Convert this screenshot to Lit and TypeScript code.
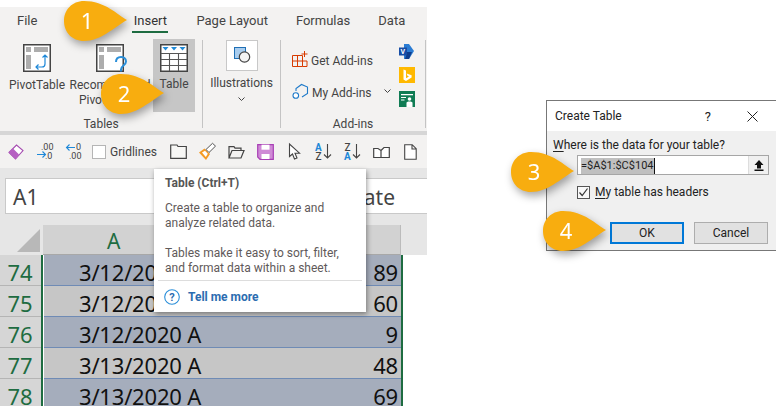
import { LitElement, html, css, svg } from "lit";
import { customElement } from "lit/decorators.js";

const rows = [
  ["74", "3/12/2020 A", "89", "blue"],
  ["75", "3/12/2020 A", "60", "gray"],
  ["76", "3/12/2020 A", "9", "blue"],
  ["77", "3/13/2020 A", "48", "gray"],
  ["78", "3/13/2020 A", "69", "blue"],
];

const pivotBase = svg`
  <rect x="0.75" y="0.75" width="26.5" height="26.5" fill="#fff" stroke="#444" stroke-width="1.5"/>
  <rect x="3" y="3" width="5" height="5" fill="#adadad"/>
  <rect x="11" y="3" width="14" height="5" fill="#adadad"/>
  <rect x="3" y="11" width="5" height="14" fill="#adadad"/>`;

const icons = {
  pivot: html`<svg width="28" height="28" viewBox="0 0 28 28">${pivotBase}
    <path d="M22 20V11M19.500 13.500L22 11l2.500 2.500M13 23h8M15.500 20.500L13 23l2.500 2.500M22 20c0 2-1 3-3 3" fill="none" stroke="#1e88d8" stroke-width="1.200"/></svg>`,
  rec: html`<svg width="32" height="36" viewBox="0 0 32 36">${pivotBase}
    <path d="M20 18c0-3.500 2.500-5 5-5s5 1.500 5 4.500c0 4-5 4-5 8v2" fill="none" stroke="#2b8fd9" stroke-width="2"/><circle cx="25" cy="32" r="1.500" fill="#2b8fd9"/></svg>`,
  table: html`<svg width="28" height="28" viewBox="0 0 28 28">
    <rect x="0.75" y="0.75" width="26.500" height="26.500" fill="#fff" stroke="#444" stroke-width="1.500"/>
    <path d="M1 9.500h26M1 15.500h26M1 21.500h26M9.500 9.500V27M18.500 9.500V27" stroke="#555" stroke-width="1.100" fill="none"/>
    <path d="M2.500 3h6l-3 3.500zM11 3h6l-3 3.500zM19.500 3h6l-3 3.500z" fill="#1f8ad8"/></svg>`,
  illus: html`<svg width="32" height="31" viewBox="0 0 32 31">
    <rect x="0.500" y="0.500" width="31" height="30" fill="#fff" stroke="#c8c8c8"/>
    <rect x="8.500" y="7.500" width="11" height="11" fill="#a9cdee" stroke="#1f6fb5"/>
    <circle cx="18.500" cy="17" r="5.200" fill="#f3f3f3" stroke="#444" stroke-width="1.200"/></svg>`,
  get: html`<svg width="16" height="16" viewBox="0 0 16 16">
    <path d="M.5 4.500H10.500V15.500H.5zM.5 10h10M5.500 4.500v11M10.500 10h4.500v5.500H10.500" fill="none" stroke="#d83b01" stroke-width="1"/>
    <path d="M12.500 0v6M9.500 3h6" stroke="#d83b01" stroke-width="1" fill="none"/></svg>`,
  my: html`<svg width="17" height="17" viewBox="0 0 17 17">
    <path d="M4 8V5.500L9.500 1.500 15.500 4V10.500L10 14" fill="none" stroke="#1e7ac9" stroke-width="1.100"/>
    <circle cx="3.800" cy="12.500" r="2.800" fill="#fff" stroke="#1e7ac9" stroke-width="1.100"/></svg>`,
  visio: html`<svg width="15" height="15" viewBox="0 0 15 15">
    <path d="M5 0h5l5 7-5 8H5z" fill="#2b7cd3"/><path d="M8 8h5l-3 7H6z" fill="#0f3d8c"/>
    <rect x="0" y="3.500" width="8" height="8" fill="#174ea6"/>
    <text x="1.500" y="10" font-size="7" font-weight="700" fill="#fff" font-family="Roboto">V</text></svg>`,
  bing: html`<svg width="16" height="16" viewBox="0 0 16 16"><rect width="16" height="16" fill="#ffb900"/>
    <path d="M4.500 2.500l2.500.9v7.800l3-1.700-1.500-.8-.9-2.300 5 1.800v2.400L7 14l-2.500-1.500z" fill="#fff"/></svg>`,
  people: html`<svg width="16" height="16" viewBox="0 0 16 16"><rect width="16" height="16" fill="#107c54"/>
    <path d="M2 3h12v1.300H2zM2 6h5v1H2zM2 8.500h3.500v1H2z" fill="#fff"/>
    <circle cx="10.500" cy="8" r="1.800" fill="#fff"/><path d="M7.500 16v-4c0-1 1-1.500 3-1.500s3 .5 3 1.500v4z" fill="#fff"/></svg>`,
  eraser: html`<svg width="16" height="16" viewBox="0 0 16 16">
    <path d="M1 8.500L8.500 1 15 6.500 7.500 15z" fill="#fff" stroke="#a54bb0" stroke-width="1.100"/>
    <path d="M1 8.500L5 4.500 11 10.500 7.500 15z" fill="#b660c2"/></svg>`,
  dec1: html`<svg width="17" height="17" viewBox="0 0 17 17">
    <path d="M1 11.500h8M6.500 8.500l3 3-3 3" fill="none" stroke="#1e88d8" stroke-width="1.100"/>
    <text x="5" y="7" font-size="9" fill="#444" font-family="Roboto">.00</text>
    <text x="9" y="15.500" font-size="9" fill="#444" font-family="Roboto">.0</text></svg>`,
  dec2: html`<svg width="17" height="17" viewBox="0 0 17 17">
    <path d="M10 4.500H1.500M4.500 1.500l-3 3 3 3" fill="none" stroke="#1e88d8" stroke-width="1.100"/>
    <text x="11" y="7" font-size="9" fill="#444" font-family="Roboto">0</text>
    <text x="4" y="15.500" font-size="9" fill="#444" font-family="Roboto">.00</text></svg>`,
  folder: html`<svg width="17" height="15" viewBox="0 0 17 15">
    <path d="M.7 1h6.300l1 1.500h8.300v11.800H.7z" fill="#f7f7f5" stroke="#444" stroke-width="1.200"/></svg>`,
  brush: html`<svg width="17" height="17" viewBox="0 0 17 17">
    <path d="M0 9.500l5.500-4 5.500 5.500-4 6z" fill="#f59a23"/><path d="M3 9.500l3-1.800 2.800 3-2 3.200z" fill="#fff"/>
    <path d="M7 6.500l6.500-6.200 3 2.800-6.500 6.400z" fill="#fff" stroke="#555" stroke-width="1"/></svg>`,
  open: html`<svg width="17" height="14" viewBox="0 0 17 14">
    <path d="M1 13V1.700h5l1 1.500h6v2.500M1 13l3-7.500h12L13 13z" fill="none" stroke="#444" stroke-width="1.200"/></svg>`,
  save: html`<svg width="17" height="16" viewBox="0 0 17 16">
    <path d="M.7.700h15.600v14.600H3L.7 13z" fill="#cf8ad6" stroke="#a83fb5" stroke-width="1.200"/>
    <rect x="4.500" y=".7" width="8" height="5" fill="#fff"/><rect x="4.500" y="10" width="8" height="5" fill="#fff"/></svg>`,
  cursor: html`<svg width="14" height="17" viewBox="0 0 14 17">
    <path d="M1.500 1v12.500l3-2.500 2 5 2.500-1-2-4.800h4.500z" fill="#fff" stroke="#444" stroke-width="1.100"/></svg>`,
  az: html`<svg width="17" height="17" viewBox="0 0 17 17">
    <text x="0" y="8" font-size="10" font-weight="700" fill="#1e88d8" font-family="Roboto">A</text>
    <text x="0.500" y="16.500" font-size="10" font-weight="500" fill="#444" font-family="Roboto">Z</text>
    <path d="M12.500 1v14M9 11.500l3.500 3.500 3.500-3.500" fill="none" stroke="#444" stroke-width="1.100"/></svg>`,
  za: html`<svg width="17" height="17" viewBox="0 0 17 17">
    <text x="0.500" y="8" font-size="10" font-weight="500" fill="#444" font-family="Roboto">Z</text>
    <text x="0" y="16.500" font-size="10" font-weight="700" fill="#1e88d8" font-family="Roboto">A</text>
    <path d="M12.500 1v14M9 11.500l3.500 3.500 3.500-3.500" fill="none" stroke="#444" stroke-width="1.100"/></svg>`,
  book: html`<svg width="17" height="12" viewBox="0 0 17 12">
    <path d="M.7 2.500H5l3 2v7H.7zM8 4.500l3-3h5.300v10H8z" fill="#fff" stroke="#444" stroke-width="1.200"/></svg>`,
  page: html`<svg width="13" height="16" viewBox="0 0 13 16">
    <path d="M.7.700h7.500l4 4v10.600H.7zM8 .7v4.300h4.300" fill="#fff" stroke="#444" stroke-width="1.100"/></svg>`,
  help: html`<svg width="16" height="16" viewBox="0 0 16 16"><circle cx="8" cy="8" r="7.300" fill="none" stroke="#2b8fd9" stroke-width="1.100"/>
    <text x="8" y="12" font-size="11" text-anchor="middle" fill="#2b6cb0" font-family="Roboto">?</text></svg>`,
  upload: html`<svg width="12" height="12" viewBox="0 0 12 12"><path d="M6 1L1.500 6H4v3.500h4V6h2.500zM1.500 10.500h9V12h-9z" fill="#111"/></svg>`,
  check: html`<svg width="11" height="11" viewBox="0 0 11 11"><path d="M1.500 5.500L4.200 8.500 9.500 1.500" fill="none" stroke="#333" stroke-width="1.200"/></svg>`,
  x: html`<svg width="11" height="11" viewBox="0 0 11 11"><path d="M.5.500l10 10M10.500.500l-10 10" stroke="#222" stroke-width="1"/></svg>`,
  chev: html`<svg width="7" height="4" viewBox="0 0 7 4"><path d="M.5.500l3 3 3-3" fill="none" stroke="#444" stroke-width="1"/></svg>`,
};

@customElement("app-root")
export class AppRoot extends LitElement {
  static styles = css`
    :host { display: block; width: 776px; height: 406px; overflow: hidden; background: #fff; font-family: Roboto, "Noto Sans", sans-serif; color: #444; position: relative; }
    .page { display: flex; height: 406px; }
    .excel { width: 427px; flex: none; padding-top: 7px; box-sizing: border-box; display: flex; flex-direction: column; }
    .tabs { display: flex; gap: 28px; height: 26px; background: #f3f2f1; padding-left: 17px; font-size: 13px; line-height: 28px; flex: none; }
    .tabs .file { margin-right: 67px; }
    .tab.active { box-shadow: inset 0 -2px 0 #1e6c41; width: 36px; text-align: center; height: 26px; color: #333; }
    .ribbon { display: flex; background: #f3f2f1; flex: none; font-size: 12px; box-sizing: border-box; padding-top: 7px; border-bottom: 4px solid #d6d6d6; height: 102px; }
    .group { display: flex; flex-direction: column; border-right: 1px solid #c4c4c4; height: 88px; box-sizing: border-box; }
    .g1 { width: 203px; }
    .g2 { width: 78px; }
    .g3 { width: 145px; }
    .g-body { height: 77px; flex: none; display: flex; }
    .g-label { text-align: center; line-height: 14px; height: 14px; font-size: 12px; }
    .big { display: flex; flex-direction: column; align-items: center; line-height: 15px; text-align: center; }
    .big svg { display: block; }
    .pivot { width: 74px; padding-top: 4px; }
    .pivot .lbl { margin-top: 6px; }
    .rec { width: 72px; padding-top: 4px; }
    .rec .ic { width: 32px; height: 28px; margin-left: 4px; }
    .rec .lbl { margin-top: 6px; white-space: nowrap; }
    .tbl { width: 42px; height: 73px; margin: -1px 0 0 7px; background: #c6c6c6; padding-top: 5px; box-sizing: border-box; }
    .tbl .lbl { margin-top: 5px; }
    .ill { width: 77px; }
    .ill .lbl { margin-top: 5px; }
    .ill .chev { margin-top: 6px; line-height: 0; }
    .addins { padding-left: 11px; }
    .add-list { display: flex; flex-direction: column; width: 107px; padding-top: 10px; gap: 14px; }
    .add-row { display: flex; align-items: center; gap: 3px; height: 18px; white-space: nowrap; }
    .add-row .txt { padding-top: 3px; }
    .add-row .chev { margin-left: 9px; line-height: 0; }
    .add-icons { display: flex; flex-direction: column; gap: 8px; padding-top: 4px; }
    .toolbar { height: 33px; background: #f3f2f1; display: flex; align-items: center; padding-left: 8px; font-size: 12px; flex: none; box-sizing: border-box; }
    .toolbar svg { display: block; flex: none; overflow: visible; }
    .t1 { display: flex; gap: 12px; align-items: center; }
    .cb { width: 12px; height: 12px; border: 1px solid #b5b5b5; background: #fff; margin-left: -2px; }
    .grid-l { width: 46px; margin-left: 4px; margin-right: 14px; white-space: nowrap; }
    .tools { display: flex; gap: 12px; align-items: center; }
    .tools > span { width: 17px; display: flex; justify-content: center; }
    .formula { height: 57px; background: #e6e6e6; padding: 10px 0 11px 5px; box-sizing: border-box; flex: none; }
    .namebox { height: 36px; background: #fff; border: 1px solid #c9c9c9; border-right: none; box-sizing: border-box; display: flex; justify-content: space-between; padding: 0 32px 0 7px; font-family: "Noto Sans", sans-serif; font-size: 21px; line-height: 37px; color: #444; }
    .colhead { display: flex; height: 30px; background: #e6e6e6; flex: none; }
    .corner { width: 43px; flex: none; display: flex; align-items: flex-end; justify-content: flex-end; padding: 0 3px 3px 0; box-sizing: border-box; }
    .corner i { display: block; width: 0; height: 0; border-left: 23px solid transparent; border-bottom: 23px solid #b8b8b8; }
    .colA { width: 358px; background: #d2d2d2; border-bottom: 1px solid #a8a8a8; border-right: 1px solid #bbb; box-sizing: border-box; padding-left: 64px; font-family: "Noto Sans", sans-serif; font-size: 21px; line-height: 33px; color: #1e6c41; }
    .row { display: flex; height: 31px; flex: none; font-family: "Noto Sans", sans-serif; font-size: 22px; line-height: 34px; color: #111; }
    .rh { width: 41px; flex: none; background: #d6d6d6; border-bottom: 1px solid #b5b5b5; box-sizing: border-box; text-align: center; color: #1e6c41; padding-right: 1px; }
    .gbar { width: 2px; background: #1e6c41; flex: none; }
    .gap { width: 1px; flex: none; background: #fff; }
    .cells { width: 357px; flex: none; display: flex; justify-content: space-between; padding: 0 3px 0 35px; box-sizing: border-box; border-bottom: 1px solid #6f8bb5; overflow: hidden; letter-spacing: -0.2px; }
    .cells.blue { background: #a5adbc; }
    .cells.gray { background: #c6c6c6; }
    .tip { position: absolute; left: 154px; top: 169px; width: 212px; height: 143px; background: #fff; box-shadow: 1px 2px 5px rgba(0,0,0,.4); box-sizing: border-box; padding: 6px 4px 0 4px; font-size: 12px; line-height: 15px; color: #5f5a5a; display: flex; flex-direction: column; }
    .tip .t { font-weight: 700; padding-left: 7px; margin-bottom: 10px; color: #555; line-height: 16px; }
    .tip p { margin: 0 0 15px; padding-left: 7px; white-space: nowrap; }
    .tip p:last-of-type { margin-bottom: 4px; }
    .tip .more { border-top: 1px solid #ddd; display: flex; align-items: center; gap: 8px; padding: 8px 0 0 6px; color: #2b6cb0; font-weight: 700; }
    .tip .more svg { display: block; }
    .dialog { width: 230px; height: 151px; margin: 100px 0 0 119px; border: 1px solid #777; border-right: none; box-sizing: border-box; background: #f0f0f0; font-size: 12px; color: #222; flex: none; display: flex; flex-direction: column; }
    .d-title { height: 30px; background: #fff; display: flex; align-items: center; padding-left: 8px; flex: none; }
    .d-title .name { flex: 1; }
    .d-title .q { margin-right: 36px; font-size: 13px; }
    .d-title .close { margin-right: 18px; line-height: 0; }
    .d-body { padding: 6px 6px 0 6px; flex: 1; display: flex; flex-direction: column; }
    .d-body u { text-underline-offset: 2px; }
    .where { line-height: 16px; white-space: nowrap; }
    .input { margin: 2px 0 0 24px; height: 20px; width: 192px; box-sizing: border-box; border: 1px solid #a6a6a6; background: #fff; display: flex; align-items: center; padding-left: 3px; flex: none; }
    .input .val { flex: 1; line-height: 16px; }
    .input .sel { background: #c0c0c0; border-right: 1px solid #111; display: inline-block; font-size: 11px; height: 16px; }
    .input .up { width: 20px; height: 18px; background: #f0f0f0; border-left: 1px solid #ddd; display: flex; align-items: center; justify-content: center; box-sizing: border-box; }
    .input .up svg { display: block; }
    .chk { margin: 10px 0 0 24px; display: flex; align-items: center; gap: 5px; line-height: 14px; }
    .chk .box { width: 13px; height: 13px; box-sizing: border-box; border: 1px solid #555; background: #f8f8f8; display: flex; align-items: center; justify-content: center; }
    .chk .box svg { display: block; }
    .btns { display: flex; gap: 10px; margin: 23px 0 0 57px; }
    .btn { width: 74px; height: 22px; box-sizing: border-box; border: 1px solid #adadad; background: #e1e1e1; text-align: center; line-height: 20px; }
    .btn.ok { border: 2px solid #0078d7; line-height: 18px; }
    .callout { position: absolute; width: 64px; height: 42px; filter: drop-shadow(2px 4px 4px rgba(0,0,0,.35)); }
    .callout svg { display: block; }
    .callout span { position: absolute; left: 0; top: 0; width: 48px; height: 42px; text-align: center; line-height: 41px; color: #fff; font-family: "Noto Sans", sans-serif; font-size: 22px; }
    .c1 { left: 63px; top: 0; }
    .c2 { left: 100px; top: 73px; }
    .c3 { left: 510px; top: 151px; }
    .c4 { left: 542px; top: 210px; }
  `;

  private callout(cls: string, n: string) {
    return html`<div class="callout ${cls}">
      <svg width="64" height="42" viewBox="0 0 64 42"><path d="M64 20C55 15 42 1 21 1 9 1 1 10 1 21 1 32 9 41 21 41 38 41 50 28 64 20Z" fill="#f8ad0f"/></svg>
      <span>${n}</span>
    </div>`;
  }

  render() {
    return html`
      <div class="page">
        <div class="excel">
          <div class="tabs">
            <span class="tab file">File</span>
            <span class="tab active">Insert</span>
            <span class="tab">Page Layout</span>
            <span class="tab">Formulas</span>
            <span class="tab">Data</span>
          </div>
          <div class="ribbon">
            <div class="group g1">
              <div class="g-body">
                <div class="big pivot">${icons.pivot}<div class="lbl">PivotTable</div></div>
                <div class="big rec"><div class="ic">${icons.rec}</div><div class="lbl">Recommended<br />PivotTables</div></div>
                <div class="big tbl">${icons.table}<div class="lbl">Table</div></div>
              </div>
              <div class="g-label">Tables</div>
            </div>
            <div class="group g2">
              <div class="g-body">
                <div class="big ill">${icons.illus}<div class="lbl">Illustrations</div><div class="chev">${icons.chev}</div></div>
              </div>
            </div>
            <div class="group g3">
              <div class="g-body addins">
                <div class="add-list">
                  <div class="add-row">${icons.get}<span class="txt">Get Add-ins</span></div>
                  <div class="add-row">${icons.my}<span class="txt">My Add-ins</span><span class="chev">${icons.chev}</span></div>
                </div>
                <div class="add-icons">${icons.visio}${icons.bing}${icons.people}</div>
              </div>
              <div class="g-label">Add-ins</div>
            </div>
          </div>
          <div class="toolbar">
            <div class="t1">${icons.eraser}${icons.dec1}${icons.dec2}<div class="cb"></div></div>
            <span class="grid-l">Gridlines</span>
            <div class="tools">
              <span>${icons.folder}</span><span>${icons.brush}</span><span>${icons.open}</span><span>${icons.save}</span>
              <span>${icons.cursor}</span><span>${icons.az}</span><span>${icons.za}</span><span>${icons.book}</span><span>${icons.page}</span>
            </div>
          </div>
          <div class="formula"><div class="namebox"><span>A1</span><span>ate</span></div></div>
          <div class="colhead"><div class="corner"><i></i></div><div class="colA">A</div></div>
          ${rows.map(
            (r) => html`<div class="row">
              <div class="rh">${r[0]}</div>
              <div class="gbar"></div>
              <div class="gap"></div>
              <div class="cells ${r[3]}"><span>${r[1]}</span><span>${r[2]}</span></div>
              <div class="gbar"></div>
            </div>`
          )}
        </div>
        <div class="dialog">
          <div class="d-title"><span class="name">Create Table</span><span class="q">?</span><span class="close">${icons.x}</span></div>
          <div class="d-body">
            <div class="where"><u>W</u>here is the data for your table?</div>
            <div class="input"><div class="val"><span class="sel">=$A$1:$C$104</span></div><div class="up">${icons.upload}</div></div>
            <div class="chk"><span class="box">${icons.check}</span><span><u>M</u>y table has headers</span></div>
            <div class="btns"><div class="btn ok">OK</div><div class="btn">Cancel</div></div>
          </div>
        </div>
      </div>
      <div class="tip">
        <div class="t">Table (Ctrl+T)</div>
        <p>Create a table to organize and<br />analyze related data.</p>
        <p>Tables make it easy to sort, filter,<br />and format data within a sheet.</p>
        <div class="more">${icons.help}<span>Tell me more</span></div>
      </div>
      ${this.callout("c1", "1")}${this.callout("c2", "2")}${this.callout("c3", "3")}${this.callout("c4", "4")}
    `;
  }
}
